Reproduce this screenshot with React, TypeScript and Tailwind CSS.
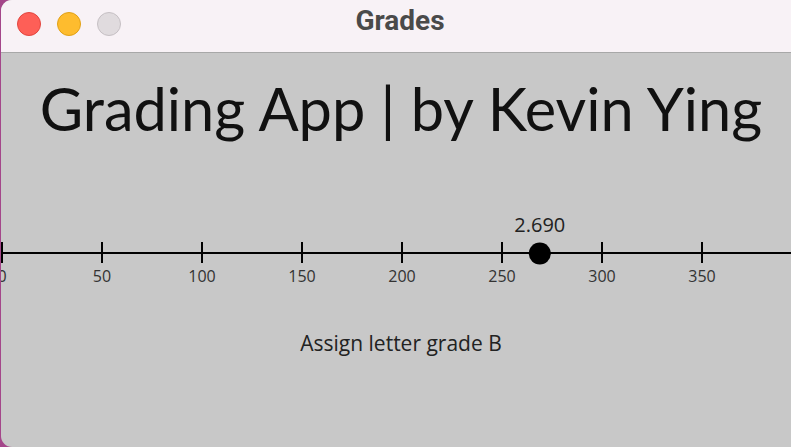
import React from "react";

const ticks = [0, 50, 100, 150, 200, 250, 300, 350];
const value = 268.9;

// the scale: 2px per point, starting 1px into the window
const NumberLine: React.FC = () => {
  const x = (v: number) => 1 + v * 2;
  return (
    <svg width="790" height="90" className="block" style={{ fontFamily: "'Open Sans', sans-serif" }}>
      <line x1="0" y1="53" x2="790" y2="53" stroke="#000" strokeWidth="2" />
      {ticks.map((t) => (
        <g key={t}>
          <line x1={x(t)} y1="42" x2={x(t)} y2="63" stroke="#000" strokeWidth="2" />
          <text x={x(t)} y="82" textAnchor="middle" fontSize="16" fill="#333">
            {t}
          </text>
        </g>
      ))}
      <circle cx={x(value)} cy="53.5" r="11" fill="#000" />
      <text x={x(value)} y="32" textAnchor="middle" fontSize="20" fill="#222">
        2.690
      </text>
    </svg>
  );
};

const App: React.FC = () => {
  return (
    <div className="w-[791px] h-[447px] bg-[#a4468a] pl-[1px] overflow-hidden">
      <div className="w-[800px] h-full rounded-l-[11px] overflow-hidden flex flex-col bg-[#c8c8c8]">
        {/* Title bar */}
        <div className="h-[53px] shrink-0 bg-[#f8f2f6] border-b border-[#a8a8a8] relative flex items-center">
          <div className="flex items-center gap-[16px] pl-[16px] -mt-[4px]">
            <span className="w-[24px] h-[24px] rounded-full bg-[#fe5f57] border border-[#e2463f]" />
            <span className="w-[24px] h-[24px] rounded-full bg-[#febc2e] border border-[#e1a116]" />
            <span className="w-[24px] h-[24px] rounded-full bg-[#e0dbde] border border-[#c6c0c4]" />
          </div>
          <div className="absolute left-0 top-[4px] w-[798px] text-center text-[28px] leading-[34px] font-bold text-[#4a4a4a] font-['Roboto',sans-serif]">
            Grades
          </div>
        </div>

        {/* Content */}
        <div className="w-[800px] flex flex-col items-center">
          <h1 className="mt-[26px] text-[59.5px] leading-none text-[#111] font-['Lato',sans-serif] font-normal whitespace-nowrap">
            Grading App | by Kevin Ying
          </h1>
          <div className="mt-[61px] self-start">
            <NumberLine />
          </div>
          <p className="mt-[39px] text-[21px] leading-[28px] text-[#222] font-['Open_Sans',sans-serif]">
            Assign letter grade B
          </p>
        </div>
      </div>
    </div>
  );
};

export default App;
